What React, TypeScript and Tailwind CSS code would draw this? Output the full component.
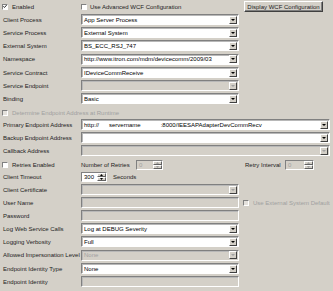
import React from "react";

const face = "font-['Liberation_Sans',Arial,sans-serif]";

function DropArrow({ disabled }: { disabled?: boolean }) {
  return (
    <span className="ml-auto mr-px flex h-[8px] w-[8px] shrink-0 items-center justify-center border border-t-white border-l-white border-b-[#404040] border-r-[#404040] bg-[#d4d0c8]">
      <svg width="4" height="2" viewBox="0 0 4 2">
        <path d="M0 0h4L2 2z" fill={disabled ? "#a0a0a0" : "#000"} />
      </svg>
    </span>
  );
}

function Field({
  value = "",
  wide,
  disabled,
  combo,
}: {
  value?: string;
  wide?: boolean;
  disabled?: boolean;
  combo?: boolean;
}) {
  return (
    <div
      className={`flex h-[11px] items-center border border-t-[#808080] border-l-[#808080] border-b-white border-r-white shadow-[inset_1px_1px_0_#b8b8b8] ${
        wide ? "w-[249px]" : "w-[158px]"
      } ${disabled ? "bg-[#d4d0c8] text-[#a0a0a0]" : "bg-white text-black"}`}
    >
      <span className="whitespace-pre pl-[2px]">{value}</span>
      {combo && <DropArrow disabled={disabled} />}
    </div>
  );
}

function Spinner({ value, disabled, w }: { value: string; disabled?: boolean; w: string }) {
  return (
    <div
      className={`flex h-[10px] items-center border border-t-[#808080] border-l-[#808080] border-b-white border-r-white ${w} ${
        disabled ? "bg-[#d4d0c8] text-[#a0a0a0]" : "bg-white text-black"
      }`}
    >
      <span className="pl-[2px]">{value}</span>
      <span className="ml-auto flex h-full w-[9px] flex-col">
        {[0, 1].map((i) => (
          <span
            key={i}
            className="flex flex-1 items-center justify-center border border-t-white border-l-white border-b-[#606060] border-r-[#606060] bg-[#d4d0c8]"
          >
            <svg width="3" height="2" viewBox="0 0 3 2">
              <path d={i === 0 ? "M0 2h3L1.5 0z" : "M0 0h3L1.5 2z"} fill={disabled ? "#a0a0a0" : "#000"} />
            </svg>
          </span>
        ))}
      </span>
    </div>
  );
}

function Check({ checked, disabled }: { checked?: boolean; disabled?: boolean }) {
  return (
    <span
      className={`flex h-[6px] w-[6px] shrink-0 items-center justify-center border border-t-[#808080] border-l-[#808080] border-b-white border-r-white ${
        disabled ? "bg-[#e4e1dc]" : "bg-white"
      }`}
    >
      {checked && (
        <svg width="5" height="5" viewBox="0 0 5 5">
          <path d="M0.5 2.3l1.3 1.4L4.5 0.8" stroke="#000" strokeWidth="1.1" fill="none" />
        </svg>
      )}
    </span>
  );
}

function Row({
  label,
  h = "h-[13px]",
  dim,
  children,
}: {
  label: string;
  h?: string;
  dim?: boolean;
  children?: React.ReactNode;
}) {
  return (
    <div className={`flex items-center ${h}`}>
      <div className={`w-[81px] shrink-0 whitespace-nowrap pl-[3px] ${dim ? "text-[#a0a0a0]" : "text-[#222]"}`}>
        {label}
      </div>
      {children}
    </div>
  );
}

export default function App() {
  return (
    <div className={`${face} h-[291px] w-[333px] overflow-hidden bg-[#d4d0c8] text-[6px] leading-none text-[#222]`}>
      <div className="flex h-[13px] items-center">
        <div className="flex w-[81px] shrink-0 items-center gap-[4px] pl-[2px]">
          <Check checked />
          <span>Enabled</span>
        </div>
        <div className="flex w-[163px] shrink-0 items-center gap-[3px]">
          <Check />
          <span>Use Advanced WCF Configuration</span>
        </div>
        <button className="flex h-[11px] w-[79px] items-center justify-center border border-t-white border-l-white border-b-[#404040] border-r-[#404040] bg-[#d4d0c8] shadow-[inset_-1px_-1px_0_#808080]">
          Display WCF Configuration
        </button>
      </div>

      <Row label="Client Process">
        <Field value="App Server Process" combo />
      </Row>
      <Row label="Service Process">
        <Field value="External System" combo />
      </Row>
      <Row label="External System">
        <Field value="BS_ECC_RSJ_747" combo />
      </Row>
      <Row label="Namespace" h="h-[14px]">
        <Field value="http://www.itron.com/mdm/devicecomm/2009/03" combo />
      </Row>
      <Row label="Service Contract">
        <Field value="IDeviceCommReceive" combo />
      </Row>
      <Row label="Service Endpoint">
        <Field disabled combo />
      </Row>
      <Row label="Binding">
        <Field value="Basic" combo />
      </Row>

      <div className="flex h-[13px] items-center gap-[4px] pl-[2px] pt-[2px] text-[#a0a0a0]">
        <Check disabled />
        <span>Determine Endpoint Address at Runtime</span>
      </div>

      <Row label="Primary Endpoint Address">
        <Field wide combo value="http://      servername            :8000/IEESAPAdapterDevCommRecv" />
      </Row>
      <Row label="Backup Endpoint Address">
        <Field wide combo />
      </Row>
      <Row label="Callback Address">
        <Field wide combo disabled />
      </Row>

      <div className="flex h-[13px] items-center pt-[2px]">
        <div className="flex w-[81px] shrink-0 items-center gap-[4px] pl-[2px]">
          <Check />
          <span>Retries Enabled</span>
        </div>
        <span className="w-[55px] shrink-0">Number of Retries</span>
        <Spinner value="0" disabled w="w-[27px]" />
        <span className="ml-[82px] w-[40px] shrink-0">Retry Interval</span>
        <Spinner value="0" disabled w="w-[29px]" />
      </div>

      <Row label="Client Timeout">
        <Spinner value="300" w="w-[26px]" />
        <span className="ml-[6px]">Seconds</span>
      </Row>
      <Row label="Client Certificate">
        <Field disabled combo />
      </Row>
      <Row label="User Name">
        <Field disabled />
        <div className="ml-[4px] flex items-center gap-[4px] text-[#a0a0a0]">
          <Check disabled />
          <span>Use External System Default</span>
        </div>
      </Row>
      <Row label="Password">
        <Field disabled />
      </Row>
      <Row label="Log Web Service Calls">
        <Field value="Log at DEBUG Severity" combo />
      </Row>
      <Row label="Logging Verbosity">
        <Field value="Full" combo />
      </Row>
      <Row label="Allowed Impersonation Level" h="h-[14px]">
        <Field value="None" disabled combo />
      </Row>
      <Row label="Endpoint Identity Type">
        <Field value="None" combo />
      </Row>
      <Row label="Endpoint Identity">
        <Field disabled />
      </Row>
    </div>
  );
}
